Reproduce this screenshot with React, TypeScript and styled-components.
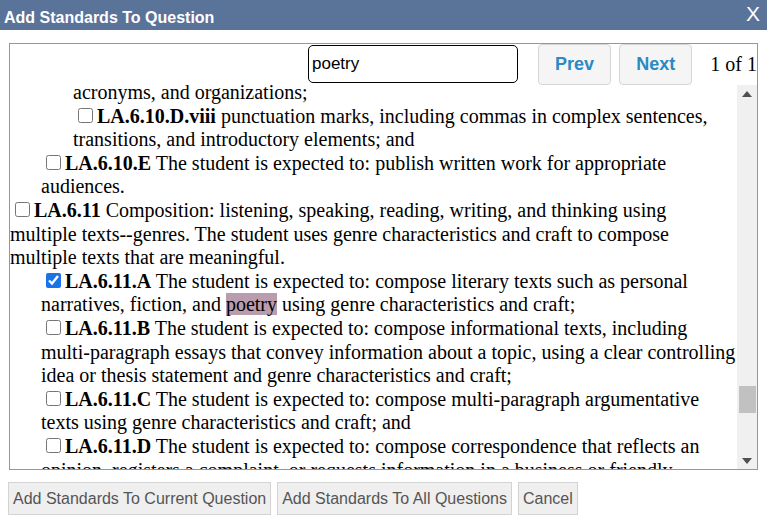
import React from 'react';
import styled, { createGlobalStyle } from 'styled-components';

const GlobalStyle = createGlobalStyle`
  html, body {
    margin: 0;
    padding: 0;
    background: #fff;
  }
  body {
    font-family: "Liberation Serif", "Times New Roman", serif;
  }
`;

interface Standard {
  code?: string;
  level: number;
  checked?: boolean;
  text: React.ReactNode;
}

const getStandards = (): Standard[] => [
  { level: 2, text: 'acronyms, and organizations;' },
  {
    code: 'LA.6.10.D.viii',
    level: 2,
    text: 'punctuation marks, including commas in complex sentences, transitions, and introductory elements; and',
  },
  {
    code: 'LA.6.10.E',
    level: 1,
    text: 'The student is expected to: publish written work for appropriate audiences.',
  },
  {
    code: 'LA.6.11',
    level: 0,
    text: 'Composition: listening, speaking, reading, writing, and thinking using multiple texts--genres. The student uses genre characteristics and craft to compose multiple texts that are meaningful.',
  },
  {
    code: 'LA.6.11.A',
    level: 1,
    checked: true,
    text: (
      <>
        The student is expected to: compose literary texts such as personal narratives, fiction, and{' '}
        <Mark>poetry</Mark> using genre characteristics and craft;
      </>
    ),
  },
  {
    code: 'LA.6.11.B',
    level: 1,
    text: 'The student is expected to: compose informational texts, including multi-paragraph essays that convey information about a topic, using a clear controlling idea or thesis statement and genre characteristics and craft;',
  },
  {
    code: 'LA.6.11.C',
    level: 1,
    text: 'The student is expected to: compose multi-paragraph argumentative texts using genre characteristics and craft; and',
  },
  {
    code: 'LA.6.11.D',
    level: 1,
    text: 'The student is expected to: compose correspondence that reflects an opinion, registers a complaint, or requests information in a business or friendly structure.',
  },
];

const StandardRow = ({ s }: { s: Standard }) => (
  <Item $level={s.level}>
    {s.code && (
      <>
        <Check type="checkbox" defaultChecked={s.checked} />
        <Code>{s.code}</Code>{' '}
      </>
    )}
    {s.text}
  </Item>
);

export default function App() {
  const standards = getStandards();
  return (
    <>
      <GlobalStyle />
      <Dialog>
        <TitleBar>
          <Title>Add Standards To Question</Title>
          <Close>X</Close>
        </TitleBar>
        <Body>
          <Box>
            <SearchRow>
              <SearchInput defaultValue="poetry" />
              <NavButton>Prev</NavButton>
              <NavButton>Next</NavButton>
              <Count>1 of 1</Count>
            </SearchRow>
            <Main>
              <List>
                {standards.map((s, i) => (
                  <StandardRow key={i} s={s} />
                ))}
              </List>
              <ScrollBar>
                <Arrow>
                  <svg width="10" height="6" viewBox="0 0 10 6">
                    <polygon points="0,6 10,6 5,0" fill="#505050" />
                  </svg>
                </Arrow>
                <Track>
                  <Thumb $top={284} />
                </Track>
                <Arrow>
                  <svg width="10" height="6" viewBox="0 0 10 6">
                    <polygon points="0,0 10,0 5,6" fill="#505050" />
                  </svg>
                </Arrow>
              </ScrollBar>
            </Main>
          </Box>
          <Footer>
            <FooterButton>Add Standards To Current Question</FooterButton>
            <FooterButton>Add Standards To All Questions</FooterButton>
            <FooterButton>Cancel</FooterButton>
          </Footer>
        </Body>
      </Dialog>
    </>
  );
}

const Dialog = styled.div`
  width: 767px;
  height: 518px;
  display: flex;
  flex-direction: column;
  overflow: hidden;
`;

const TitleBar = styled.div`
  height: 30px;
  background: #5a7399;
  display: flex;
  align-items: center;
  justify-content: space-between;
  padding: 0 7px 0 4px;
`;

const Title = styled.div`
  color: #fff;
  font-family: "Liberation Sans", Arial, sans-serif;
  font-weight: bold;
  font-size: 16px;
  margin-top: 6px;
`;

const Close = styled.div`
  color: #fff;
  font-family: "Liberation Sans", Arial, sans-serif;
  font-size: 21px;
  line-height: 1;
  margin-top: -3px;
`;

const Body = styled.div`
  padding: 13px 9px 0 9px;
`;

const Box = styled.div`
  height: 425px;
  border: 1px solid #7f9db9;
  display: flex;
  flex-direction: column;
`;

const SearchRow = styled.div`
  height: 41px;
  display: flex;
  align-items: center;
  padding-left: 298px;
  gap: 8px;
  white-space: nowrap;
  overflow: hidden;
`;

const SearchInput = styled.input`
  box-sizing: border-box;
  width: 210px;
  height: 38px;
  margin-right: 12px;
  margin-top: -1px;
  border: 1px solid #000;
  border-radius: 5px;
  padding: 0 3px;
  font-family: "Liberation Sans", Arial, sans-serif;
  font-size: 17px;
  color: #000;
  outline: none;
`;

const NavButton = styled.button`
  box-sizing: border-box;
  width: 74px;
  height: 41px;
  margin-top: -1px;
  background: #f5f5f5;
  border: 1px solid #d5d5d5;
  border-radius: 4px;
  color: #2a8ac4;
  font-family: "Liberation Sans", Arial, sans-serif;
  font-weight: bold;
  font-size: 18px;
  padding: 0;
`;

const Count = styled.span`
  margin-left: 10px;
  font-size: 20px;
  color: #000;
`;

const Main = styled.div`
  flex: 1;
  display: flex;
  min-height: 0;
`;

const List = styled.div`
  flex: 1;
  overflow: hidden;
  font-size: 20px;
  line-height: 23.6px;
  color: #000;
  & > :first-child {
    margin-top: -4px;
  }
`;

const Item = styled.div<{ $level: number }>`
  padding-left: ${p => [0, 31, 63][p.$level]}px;
`;

const Check = styled.input`
  width: 15px;
  height: 15px;
  margin: 0 4px 1px 5px;
  vertical-align: baseline;
  accent-color: #1a73e8;
`;

const Code = styled.b`
  font-weight: bold;
`;

const Mark = styled.span`
  background: #b99cad;
`;

const ScrollBar = styled.div`
  width: 20px;
  background: #f0f0f0;
  display: flex;
  flex-direction: column;
`;

const Arrow = styled.div`
  height: 17px;
  display: flex;
  align-items: center;
  justify-content: center;
`;

const Track = styled.div`
  flex: 1;
  display: flex;
  flex-direction: column;
  align-items: center;
`;

const Thumb = styled.div<{ $top: number }>`
  width: 17px;
  height: 27px;
  margin-top: ${p => p.$top}px;
  background: #c1c1c1;
`;

const Footer = styled.div`
  display: flex;
  gap: 6px;
  margin-top: 12px;
  margin-left: -1px;
`;

const FooterButton = styled.button`
  height: 33px;
  background: #efefef;
  border: 1px solid #d3d3d3;
  border-radius: 0;
  color: #555;
  font-family: "Liberation Sans", Arial, sans-serif;
  font-size: 16px;
  padding: 0 4px;
`;
